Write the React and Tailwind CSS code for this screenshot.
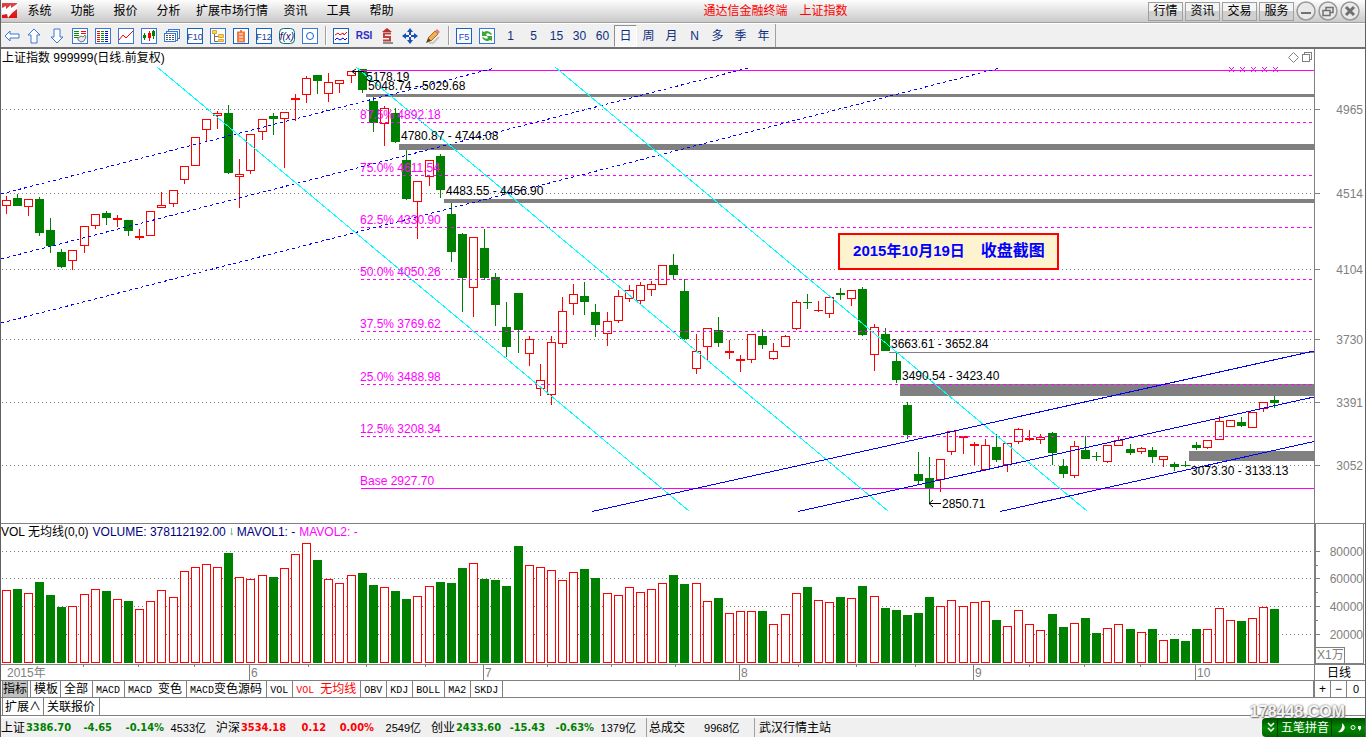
import React from 'react';

const RED = '#ff0000';
const GREEN = '#008000';
const GRAY = '#808080';
const MAGENTA = '#ff00ff';

// [up/down, high, body top, body bottom, low, volume top]
const CANDLES = [
  ['r', 196, 200, 206, 214, 590], ['g', 194, 198, 206, 206, 589], ['r', 199, 199, 207, 216, 593],
  ['g', 197, 199, 233, 236, 582], ['g', 218, 230, 246, 253, 595], ['g', 249, 252, 267, 268, 607],
  ['r', 250, 250, 261, 270, 606], ['r', 226, 226, 246, 253, 594], ['r', 214, 214, 226, 229, 589],
  ['g', 211, 213, 218, 225, 591], ['r', 215, 218, 220, 227, 599], ['g', 220, 220, 231, 236, 601],
  ['r', 229, 236, 238, 240, 609], ['r', 211, 211, 236, 236, 601], ['r', 192, 205, 208, 208, 590],
  ['r', 190, 190, 204, 207, 597], ['r', 166, 166, 180, 184, 571], ['r', 137, 137, 166, 166, 567],
  ['r', 119, 119, 130, 142, 564], ['r', 111, 113, 116, 129, 567], ['g', 105, 113, 173, 174, 553],
  ['r', 159, 174, 177, 208, 577], ['r', 134, 134, 171, 174, 579], ['r', 119, 119, 132, 140, 575],
  ['g', 113, 116, 119, 135, 577], ['r', 112, 112, 119, 168, 568], ['r', 94, 98, 100, 121, 554],
  ['r', 76, 78, 95, 103, 543], ['g', 75, 75, 81, 94, 560], ['r', 73, 82, 94, 102, 579],
  ['r', 80, 80, 84, 93, 583], ['r', 71, 71, 76, 83, 575], ['g', 69, 69, 90, 93, 573],
  ['g', 97, 101, 123, 132, 585], ['r', 106, 108, 124, 146, 587], ['g', 108, 113, 142, 143, 591],
  ['g', 150, 160, 199, 200, 599], ['r', 181, 181, 202, 239, 596], ['r', 160, 160, 177, 186, 586],
  ['g', 154, 156, 190, 198, 582], ['g', 203, 214, 252, 262, 583], ['g', 233, 234, 278, 312, 568],
  ['r', 237, 237, 288, 317, 563], ['g', 229, 248, 278, 280, 579], ['g', 273, 277, 305, 326, 580],
  ['g', 302, 327, 347, 357, 586], ['g', 293, 293, 330, 353, 546], ['r', 336, 339, 354, 366, 565],
  ['r', 364, 380, 389, 396, 567], ['r', 336, 342, 395, 405, 570], ['r', 297, 311, 344, 348, 580],
  ['r', 284, 294, 304, 315, 572], ['g', 282, 296, 302, 315, 569], ['g', 304, 312, 325, 337, 578],
  ['r', 312, 321, 334, 346, 593], ['r', 290, 296, 321, 323, 595], ['r', 285, 290, 299, 302, 587],
  ['r', 282, 285, 301, 304, 592], ['r', 281, 284, 290, 296, 589], ['r', 265, 265, 285, 285, 583],
  ['g', 254, 265, 275, 279, 575], ['g', 279, 291, 339, 340, 584], ['r', 334, 351, 369, 374, 583],
  ['r', 328, 328, 347, 360, 601], ['g', 317, 330, 343, 347, 598], ['r', 340, 351, 353, 359, 613],
  ['r', 355, 359, 361, 372, 611], ['r', 334, 334, 360, 363, 611], ['g', 329, 336, 345, 349, 611],
  ['r', 343, 351, 359, 360, 624], ['r', 335, 336, 347, 347, 614], ['r', 300, 302, 329, 330, 593],
  ['g', 294, 302, 303, 309, 587], ['r', 301, 310, 311, 312, 600], ['r', 297, 297, 314, 318, 602],
  ['g', 288, 293, 295, 300, 597], ['r', 290, 290, 299, 306, 598], ['g', 287, 289, 335, 336, 586],
  ['r', 324, 327, 355, 371, 596], ['g', 328, 334, 351, 351, 608], ['g', 353, 361, 380, 383, 610],
  ['g', 402, 405, 435, 439, 615], ['g', 452, 474, 481, 484, 613], ['g', 457, 478, 488, 503, 597],
  ['r', 459, 459, 480, 492, 606], ['r', 431, 431, 452, 455, 600], ['r', 436, 436, 438, 454, 606],
  ['r', 442, 444, 446, 465, 602], ['r', 439, 445, 470, 471, 601], ['g', 434, 447, 460, 462, 620],
  ['r', 443, 443, 465, 472, 626], ['r', 428, 429, 442, 444, 610], ['r', 430, 438, 440, 441, 624],
  ['r', 434, 437, 440, 444, 630], ['g', 432, 433, 453, 465, 614], ['g', 459, 466, 474, 478, 627],
  ['r', 441, 446, 476, 478, 623], ['g', 436, 450, 459, 459, 618], ['g', 452, 456, 457, 461, 633],
  ['r', 445, 445, 462, 463, 628], ['r', 437, 440, 446, 446, 624], ['g', 444, 449, 453, 455, 629],
  ['r', 447, 448, 452, 454, 632], ['g', 447, 450, 457, 463, 629], ['r', 456, 456, 460, 467, 640],
  ['g', 462, 464, 467, 471, 639], ['g', 461, 465, 466, 467, 641], ['g', 442, 445, 448, 450, 629],
  ['r', 440, 440, 448, 449, 629], ['r', 416, 421, 440, 440, 608], ['r', 420, 420, 427, 427, 620],
  ['g', 417, 422, 426, 427, 621], ['r', 412, 412, 428, 428, 618], ['r', 402, 402, 409, 412, 607],
  ['g', 396, 400, 403, 408, 609],
];

const barX = (i) => Math.floor(6.17 + 11.1272 * i);

const PRICE_LEVELS = [[4965, 109], [4514, 193], [4104, 269], [3730, 339], [3391, 402], [3052, 465]];

const RETRACE = [
  ['87.5% 4892.18', 122, 119], ['75.0% 4611.54', 175, 172], ['62.5% 4330.90', 227, 224],
  ['50.0% 4050.26', 279, 276], ['37.5% 3769.62', 331, 328], ['25.0% 3488.98', 384, 381],
  ['12.5% 3208.34', 436, 433],
];

// x, y, height of the unfilled gaps
const GAPS = [
  [366, 94, 3], [399, 144, 6], [444, 199, 4], [889, 352, 1], [900, 384, 12], [1189, 451, 10],
];

const GAP_LABELS = [
  ['5178.19', 366, 81], ['5048.74 - 5029.68', 368, 90], ['4780.87 - 4744.08', 401, 140],
  ['4483.55 - 4456.90', 446, 195], ['3663.61 - 3652.84', 891, 348], ['3490.54 - 3423.40', 902, 380],
  ['2850.71', 942, 508], ['3073.30 - 3133.13', 1191, 475],
];

const VOL_LEVELS = [[80000, 551], [60000, 578], [40000, 606], [20000, 634]];
const MONTHS = [['6', 249], ['7', 483], ['8', 739], ['9', 973], ['10', 1195]];
const WEEKS = [83, 138, 194, 308, 366, 425, 547, 611, 675, 798, 856, 915, 1029, 1084, 1140];

function Body({ up, x, top, bottom }) {
  const h = bottom - top;
  if (!up || h < 3) {
    return <rect x={x - 4} y={top} width="9" height={h} fill={up ? RED : GREEN} />;
  }
  return <rect x={x - 3.5} y={top + 0.5} width="8" height={h - 1} fill="#fff" stroke={RED} />;
}

function PriceChart() {
  return (
    <svg viewBox="1 49 1364 474" className="block w-full" fontSize="12" role="img" aria-label="上证指数日线">
      <g shapeRendering="crispEdges">
        {PRICE_LEVELS.map(([v, y]) => (
          <line key={v} x1="2" x2="1314" y1={y + 0.5} y2={y + 0.5} stroke={GRAY} strokeDasharray="1 3" />
        ))}
        {CANDLES.map(([c, high, top, bottom, low], i) => (
          <g key={i}>
            <rect x={barX(i)} y={high} width="1" height={low - high} fill={c === 'r' ? RED : GREEN} />
            <Body up={c === 'r'} x={barX(i)} top={top} bottom={bottom} />
          </g>
        ))}
        {GAPS.map(([x, y, h]) => (
          <rect key={x} x={x} y={y} width={1314 - x} height={h} fill={GRAY} />
        ))}
        {RETRACE.map(([t, y]) => (
          <line key={t} x1="361" x2="1314" y1={y + 0.5} y2={y + 0.5} stroke={MAGENTA} strokeDasharray="3 3" />
        ))}
        <path d="M361 70.5H1314M361 488.5H1314" stroke={MAGENTA} />
        <path d="M1 194L495 68M1 259L748 68M1 323L1000 68" stroke="#0000ff" strokeDasharray="3 3" />
        <path d="M157 67L689 511M356 67L888 511M555 67L1087 511" stroke="#00ffff" />
        <path d="M592 511.5L1314 351M798 511.5L1314 397M1000 511.5L1314 441.5" stroke="#0000ff" />
      </g>
      {[1231, 1242, 1253, 1264, 1275].map((x) => (
        <path key={x} d={`M${x - 2} 67l5 5m0-5l-5 5`} stroke={MAGENTA} />
      ))}
      <g fill={MAGENTA}>
        {RETRACE.map(([t, , y]) => (
          <text key={t} x="360" y={y}>{t}</text>
        ))}
        <text x="360" y="485">Base 2927.70</text>
      </g>
      {GAP_LABELS.map(([t, x, y]) => (
        <text key={t} x={x} y={y}>{t}</text>
      ))}
      <path d="M929 503.5H941M933 500l-4 3.5l4 3.5M352 71.5H364M356 69l-4 2.5l4 3" fill="none" stroke="#000" />
      <g shapeRendering="crispEdges">
        <path d="M1314.5 49V523" stroke={GRAY} />
        {PRICE_LEVELS.map(([v, y]) => (
          <path key={v} d={`M1315 ${y + 0.5}h5`} stroke={GRAY} />
        ))}
      </g>
      {PRICE_LEVELS.map(([v, y]) => (
        <text key={v} x="1363" y={y + 5} textAnchor="end" fill={GRAY}>{v}</text>
      ))}
      <g fill="none" stroke={GRAY}>
        <path d="M1293.5 52.5l5 5l-5 5l-5-5z" />
        <path d="M1302.5 54.5h7v7h-7zM1304.5 54.5v-2h7v7h-2" shapeRendering="crispEdges" />
      </g>
    </svg>
  );
}

function VolumeChart() {
  return (
    <svg viewBox="1 523 1364 158" className="block w-full" fontSize="12" role="img" aria-label="成交量">
      <g shapeRendering="crispEdges" stroke={GRAY} fill="none">
        {VOL_LEVELS.map(([v, y]) => (
          <line key={v} x1="2" x2="1314" y1={y + 0.5} y2={y + 0.5} strokeDasharray="1 3" />
        ))}
        <path d="M1 523.5H1365M1 664.5H1365M1315 663.5H1364M1 680.5H1365M1314.5 523V681M1315.5 523V664M1363.5 523V664" />
        {VOL_LEVELS.map(([v, y]) => (
          <path key={v} d={`M1316 ${y + 0.5}h4`} />
        ))}
        <path d="M1316 565.5h2M1316 592.5h2M1316 620.5h2M1316 647.5h28.5V663" />
        {MONTHS.map(([m, x]) => (
          <path key={m} d={`M${x + 0.5} 664V680`} />
        ))}
        {WEEKS.map((x) => (
          <path key={x} d={`M${x + 0.5} 664v3`} />
        ))}
      </g>
      <g shapeRendering="crispEdges">
        {CANDLES.map(([c, , , , , top], i) => (
          <Body key={i} up={c === 'r'} x={barX(i)} top={top} bottom={663} />
        ))}
      </g>
      <g fill={GRAY}>
        {VOL_LEVELS.map(([v, y]) => (
          <text key={v} x="1363" y={y + 5} textAnchor="end">{v}</text>
        ))}
        <text x="1317" y="659">X1万</text>
        <text x="7" y="677">2015年</text>
        {MONTHS.map(([m, x]) => (
          <text key={m} x={x + 2} y="677">{m}</text>
        ))}
      </g>
      <text x="1327" y="677">日线</text>
    </svg>
  );
}

function Icon({ children }) {
  return <svg width="16" height="16" viewBox="0 0 16 16" fill="none">{children}</svg>;
}

function Frame({ color = '#3a78d8' }) {
  return <path d="M.5.5h15v15h-15z" fill="#fff" stroke={color} shapeRendering="crispEdges" />;
}

function Boxed({ text, color = '#1c3f94' }) {
  return (
    <Icon>
      <Frame color="#1064c8" />
      <text x="8" y="12" fontSize="9" textAnchor="middle" fill={color}>{text}</text>
    </Icon>
  );
}

const TOOLS = [
  ['后退', <Icon><path d="M1 8l5-5v3h9v4H6v3z" fill="#fff" stroke="#3a78d8" /></Icon>],
  ['上移', <Icon><path d="M8 1l6 6h-3v8H5V7H2z" fill="#fff" stroke="#3a78d8" /></Icon>],
  ['下移', <Icon><path d="M8 15l6-6h-3V1H5v8H2z" fill="#fff" stroke="#3a78d8" /></Icon>],
  ['自选', (
    <Icon>
      <Frame />
      <g shapeRendering="crispEdges">
        <path d="M2 3.5h5M2 5.5h5M2 7.5h5M2 9.5h4" stroke="#009000" />
        <path d="M9 3.5h5M9 5.5h5" stroke="#ff0000" />
      </g>
      <path d="M6 12l3 2l3-1l2-4l-1-2l-2 2l-2-1l-3 2z" fill="#e8e8e8" stroke="#707070" />
    </Icon>
  )],
  ['列表', (
    <Icon>
      <Frame />
      <g strokeWidth="3" strokeDasharray="1 1" shapeRendering="crispEdges">
        <path d="M3.5 3v11" stroke="#ff0000" />
        <path d="M7.5 3v11" stroke="#009000" />
        <path d="M11.5 3v11" stroke="#0000ff" />
      </g>
    </Icon>
  )],
  ['分时', <Icon><Frame /><path d="M1 12l4-5l3 3l3-3l4-4" stroke="#ff0000" /></Icon>],
  ['K线', (
    <Icon>
      <Frame />
      <g shapeRendering="crispEdges">
        <path d="M3.5 5v7M12.5 2v9" stroke="#008000" />
        <path d="M8.5 3v10" stroke="#ff0000" />
        <path d="M2 7h3v3H2zM11 3h3v5h-3z" fill="#008000" />
        <path d="M7 5h3v5H7z" fill="#ff0000" />
      </g>
    </Icon>
  )],
  ['资讯', (
    <Icon>
      <g shapeRendering="crispEdges">
        <path d="M4.5 1.5h11v9h-11z" fill="#fff" stroke="#3a78d8" />
        <path d="M2.5 3.5h11v9h-11z" fill="#fff" stroke="#3a78d8" />
        <path d="M.5 5.5h11v8H.5z" fill="#fff" stroke="#3a78d8" />
        <path d="M2 7.5h8M2 9.5h8M2 11.5h8" stroke="#505050" strokeDasharray="2 1" />
      </g>
    </Icon>
  )],
  ['F10', <Boxed text="F10" />],
  ['板块', (
    <Icon>
      <Frame />
      <path d="M4.5 5v8.5h4M4.5 8.5h4" stroke="#707070" />
      <path d="M2.5 2.5h4v3h-4zM8.5 6.5h5v3h-5zM8.5 11.5h5v2h-5z" fill="#ffd060" stroke="#e8a820" />
    </Icon>
  )],
  ['自选股', (
    <Icon>
      <Frame color="#1064c8" />
      <path d="M5 4.5h6v9H5zM5 7.5h6M5 10.5h6M8 2v2" stroke="#f47840" strokeWidth="2" />
    </Icon>
  )],
  ['F12', <Boxed text="F12" />],
  ['公式', (
    <Icon>
      <rect x=".5" y=".5" width="15" height="15" rx="4" fill="#fff" stroke="#007080" />
      <text x="8" y="12" fontSize="10" fontStyle="italic" textAnchor="middle" fill="#101070">f(x)</text>
    </Icon>
  )],
  ['定制', <Icon><Frame /><circle cx="8" cy="8" r="3.5" stroke="#1064c8" /></Icon>],
];

const DRAW_TOOLS = [
  ['叠加', (
    <Icon>
      <Frame color="#1064c8" />
      <path d="M2 7l3-2l2 2l3-2l1 2l3-3" stroke="#ff0000" />
      <path d="M2 12l2-2l3 2l3-2l2 2l2-2" stroke="#0000ff" />
    </Icon>
  )],
  ['RSI', <span className="text-[10px] font-bold text-[#2d2dc8]">RSI</span>],
  ['除权', (
    <Icon>
      <path d="M8 0l5 4H3z" fill="#b83030" />
      <path d="M12 5.5H5v3.5h6v3.5H4" stroke="#c04040" strokeWidth="2" />
      <path d="M4 15h10" stroke="#909090" strokeWidth="2" />
    </Icon>
  )],
  ['移动', (
    <Icon>
      <path d="M8 0l3 4H5zM8 16l3-4H5zM0 8l4-3v6zM16 8l-4-3v6z" fill="#1850b8" />
      <path d="M8 3v10M3 8h10" stroke="#1850b8" strokeWidth="2" />
      <path d="M7 7h2v2H7z" fill="#fff" />
    </Icon>
  )],
  ['画线', (
    <Icon>
      <path d="M4 15h4l6-6" stroke="#c8c8c8" strokeWidth="2" />
      <path d="M3 10l7-7l3 3l-7 7z" fill="#f0b050" stroke="#a86a28" />
      <path d="M10 3l2-2l3 3l-2 2z" fill="#e08080" />
      <path d="M1 15l2-5l3 3z" fill="#604020" />
    </Icon>
  )],
];

const VIEW_TOOLS = [
  ['F5', <Boxed text="F5" color="#1c3fd4" />],
  ['刷新', (
    <Icon>
      <Frame />
      <path d="M3 8V3l2 1q4-3 8 2l-1 1q-3-3-5-1l1 2zM13 8v5l-2-1q-4 3-8-2l1-1q3 3 5 1L8 8z" fill="#3aa838" />
    </Icon>
  )],
];

const PERIODS = ['1', '5', '15', '30', '60', '日', '周', '月', 'N', '多', '季', '年'];

function ToolGroup({ items }) {
  return items.map(([name, icon]) => (
    <button key={name} aria-label={name} className="flex h-6 w-[23px] items-center justify-center pr-px first:w-[22px]">
      {icon}
    </button>
  ));
}

function Divider() {
  return (
    <span className="flex w-2 justify-center">
      <span className="h-[19px] w-[2px] border-l border-[#a0a0a0] bg-white" />
    </span>
  );
}

const MENUS = ['系统', '功能', '报价', '分析', '扩展市场行情', '资讯', '工具', '帮助'];

function MenuBar() {
  return (
    <header className="flex h-[23px] items-center border-b border-[#a0a0a0] bg-linear-to-b from-[#fdfdfd] to-[#cacaca]">
      <svg width="16" height="16" viewBox="0 0 16 16" className="ml-px" aria-hidden="true">
        <defs>
          <linearGradient id="logo" x1="0" y1="0" x2="0" y2="1">
            <stop offset="0" stopColor="#d84848" />
            <stop offset="1" stopColor="#e01010" />
          </linearGradient>
        </defs>
        <path d="M0 0h15v15H0z" fill="url(#logo)" />
        <path d="M0 5l4-2l0 3l5-4l0 3l6-4v5l-5 4l-4 5l-1-4l-5 1z" fill="#fff" />
      </svg>
      <nav className="flex">
        {MENUS.map((m) => (
          <button key={m} className={m.length > 2 ? 'w-[84px]' : 'w-[43px]'}>{m}</button>
        ))}
      </nav>
      <h1 className="flex flex-1 justify-center gap-3 text-[#ff0000]">
        <span>通达信金融终端</span>
        <span>上证指数</span>
      </h1>
      <div className="flex items-center gap-[2px] pr-[5px]">
        {['行情', '资讯', '交易', '服务'].map((t) => (
          <button key={t} className="h-[19px] w-[35px] border border-[#a0a0a0] bg-linear-to-b from-[#f4f4f4] from-50% to-[#cfcfcf] to-50% leading-4">
            {t}
          </button>
        ))}
        <WindowButton name="最小化"><path d="M5 12h10" strokeWidth="2" /></WindowButton>
        <WindowButton name="还原">
          <path d="M5 9.5h7v5H5zM8 9V6.5h7v5h-3" strokeWidth="1.5" />
        </WindowButton>
        <WindowButton name="关闭"><path d="M6 6l8 8m0-8l-8 8" strokeWidth="3" /></WindowButton>
      </div>
    </header>
  );
}

function WindowButton({ name, children }) {
  return (
    <button aria-label={name}>
      <svg width="20" height="20" viewBox="0 0 20 20" fill="none" stroke="#707070" className="block">
        <circle cx="10" cy="10" r="9" fill="#e9e9e9" stroke="#989898" strokeWidth="1.5" />
        {children}
      </svg>
    </button>
  );
}

function Toolbar() {
  return (
    <div className="flex h-[26px] items-center border-t border-b-2 border-t-white border-b-[#707070] bg-[#f0f0f0] text-[#0c2f80]">
      <ToolGroup items={TOOLS} />
      <Divider />
      <ToolGroup items={DRAW_TOOLS} />
      <Divider />
      <ToolGroup items={VIEW_TOOLS} />
      {PERIODS.map((p) => (
        <button
          key={p}
          className={
            p === '日'
              ? 'h-[22px] w-[23px] border border-[#909090] border-r-white border-b-white bg-[#f8f8f8]'
              : 'h-[22px] w-[23px]'
          }
        >
          {p}
        </button>
      ))}
      <span className="h-[23px] border-l border-[#a0a0a0]" />
    </div>
  );
}

const INDICATORS = ['全部', 'MACD', 'MACD 变色', 'MACD变色源码', 'VOL', 'VOL 无均线', 'OBV', 'KDJ', 'BOLL', 'MA2', 'SKDJ'];

// half-width letters in the tab captions are set in mono
function Caption({ text }) {
  return text.split(/([A-Z0-9 ]+)/).filter(Boolean).map((s) => (
    /[A-Z]/.test(s)
      ? <span key={s} className="font-['Liberation_Mono',monospace] text-[10px] whitespace-pre">{s}</span>
      : s
  ));
}

function Tabs() {
  return (
    <>
      <div className="flex h-[17px] items-stretch border-b border-[#808080] leading-4">
        <button className="ml-px border-x border-[#808080] bg-[#c0c0c0]">指标</button>
        <button className="ml-[2px] border-x border-[#808080] pr-[2px] pl-[3px]">模板</button>
        {INDICATORS.map((t) => (
          <button
            key={t}
            className={
              t === 'VOL 无均线'
                ? 'border-r border-[#808080] pr-1 pl-[3px] text-[#ff0000]'
                : 'border-r border-[#808080] pr-1 pl-[3px]'
            }
          >
            <Caption text={t} />
          </button>
        ))}
        <div className="ml-auto flex border-l-2 border-[#808080]">
          <button className="w-4 border-r border-[#808080]" aria-label="放大">+</button>
          <button className="w-4 border-r border-[#808080]" aria-label="缩小">−</button>
          <button className="w-[18px] text-[11px]">0</button>
        </div>
      </div>
      <div className="flex h-[18px] border-b border-[#808080] leading-4">
        <button className="ml-px border-x border-[#808080] px-[2px]">扩展∧</button>
        <button className="border-r border-[#808080] pr-1 pl-[3px]">关联报价</button>
      </div>
    </>
  );
}

const INDEXES = [
  ['上证', '3386.70', '-4.65', '-0.14%', '4533亿', 'text-[#008000]', 'w-[41px]', 'w-[52px]', 'w-[42px]'],
  ['沪深', '3534.18', '0.12', '0.00%', '2549亿', 'text-[#ff0000]', 'w-[40px]', 'w-[48px]', 'w-[47px]'],
  ['创业', '2433.60', '-15.43', '-0.63%', '1379亿', 'text-[#008000]', 'w-[44px]', 'w-[49px]', 'w-[42px]'],
];

function StatusBar() {
  return (
    <footer className="flex h-[21px] items-center border-t-2 border-white bg-[#f0f0f0]">
      {INDEXES.map(([name, value, diff, pct, amount, color, w1, w2, w3]) => (
        <div key={name} className="mr-[10px] flex items-center">
          <span>{name}</span>
          <span className={`flex text-right font-['DejaVu_Sans_Condensed','Liberation_Sans',sans-serif] text-[11px] font-bold ${color}`}>
            <span className="w-[46px]">{value}</span>
            <span className={w1}>{diff}</span>
            <span className={w2}>{pct}</span>
          </span>
          <span className={`${w3} text-right text-[11px]`}>{amount}</span>
        </div>
      ))}
      <div className="flex h-full items-center border-l border-[#a0a0a0] pl-[2px]">
        <span className="w-[55px]">总成交</span>
        <span className="w-[50px] text-[11px]">9968亿</span>
      </div>
      <div className="flex h-full items-center border-l border-[#a0a0a0] pl-1">武汉行情主站</div>
      <div className="relative ml-auto flex h-[19px] w-[103px] items-center rounded-l-sm bg-linear-to-b from-[#005000] via-[#008a00] to-[#006400] text-white">
        <svg width="16" height="19" viewBox="0 0 16 19" fill="none" stroke="#fff">
          <path d="M6 5l3 3l3-3M6 10l3 3l3-3" strokeWidth="1.5" />
          <path d="M15.5 0v19" stroke="#003c00" />
        </svg>
        <span className="w-[54px] border-r border-[#003c00] pl-[3px]">五笔拼音</span>
        <svg width="33" height="19" viewBox="0 0 33 19" fill="#fff">
          <path d="M10 5q5 4 1 8q-2 2-5 1q5-3 4-9z" />
          <circle cx="21" cy="9.5" r="2" fill="none" stroke="#fff" />
          <path d="M26 8h3v3l-2 2v-2h-1z" />
        </svg>
        <span className="absolute right-5 bottom-[17px] text-[16px] leading-4 font-bold text-[#f4f4f4] [text-shadow:0_0_2px_#555,1px_1px_1px_#888]">
          178448.COM
        </span>
      </div>
    </footer>
  );
}

export default function App() {
  return (
    <div className="min-h-screen border-x border-[#606060] bg-white font-['Liberation_Sans','Noto_Sans_CJK_SC',sans-serif] text-[12px] leading-4 text-black">
      <MenuBar />
      <Toolbar />
      <main>
        <section className="relative">
          <PriceChart />
          <h2 className="absolute top-px left-px">上证指数 999999(日线.前复权)</h2>
          <div className="absolute top-[38.8%] left-[61.4%] flex h-[37px] w-[221px] items-center justify-center gap-4 border-2 border-[#ff0000] bg-[#fdf4cf] text-[15px] font-bold text-[#0000ff]">
            <span>2015年10月19日</span>
            <span className="text-[16px]">收盘截图</span>
          </div>
        </section>
        <section className="relative">
          <VolumeChart />
          <div className="absolute top-px left-0 flex items-center gap-1">
            <span>VOL 无均线(0,0)</span>
            <span className="text-[#000080]">VOLUME: 378112192.00</span>
            <svg width="3" height="8" viewBox="0 0 3 8" aria-hidden="true">
              <path d="M1 0h1v5h1l-1 3l-2-3h1z" fill="#90c890" />
            </svg>
            <span className="text-[#000080]">MAVOL1: -</span>
            <span className="text-[#ff00ff]">MAVOL2: -</span>
          </div>
        </section>
      </main>
      <Tabs />
      <StatusBar />
    </div>
  );
}
